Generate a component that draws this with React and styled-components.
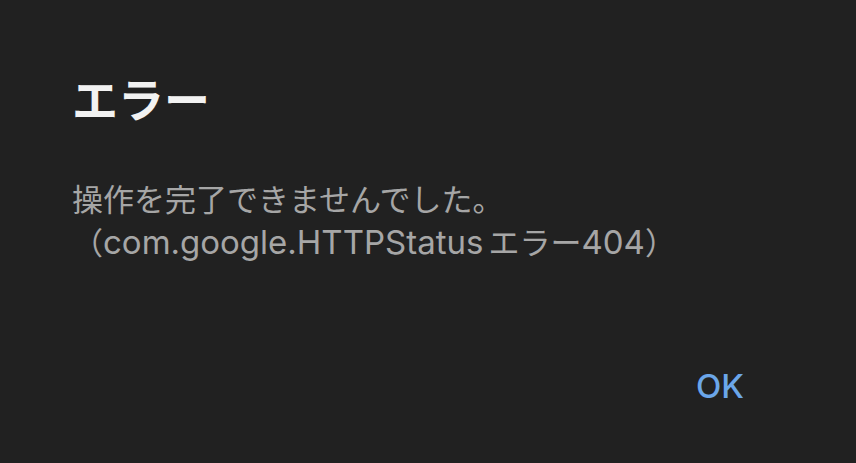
import React from "react";
import styled, { createGlobalStyle } from "styled-components";

const GlobalStyle = createGlobalStyle`
  html, body {
    margin: 0;
    padding: 0;
    background: #212121;
  }
  body {
    font-family: "Inter", "Noto Sans CJK JP", sans-serif;
  }
`;

const Dialog = styled.div`
  width: 856px;
  height: 463px;
  box-sizing: border-box;
  background: #212121;
  padding: 67px 112px 0 72px;
  display: flex;
  flex-direction: column;
`;

const Title = styled.h1`
  margin: 0;
  font-family: "Noto Sans CJK JP", sans-serif;
  font-weight: 700;
  font-size: 46px;
  line-height: 60px;
  color: #f2f2f2;
`;

const Message = styled.p`
  margin: 52px 0 0 0;
  font-family: "Inter", "Noto Sans CJK JP", sans-serif;
  font-size: 31px;
  line-height: 42px;
  color: #a6a6a6;
`;

const Latin = styled.span`
  font-size: 33px;
  margin-right: ${(p) => (p.$gap ? "5px" : "0")};
`;

const Actions = styled.div`
  margin-top: auto;
  margin-bottom: 57px;
  display: flex;
  justify-content: flex-end;
`;

const TextButton = styled.button`
  border: none;
  background: none;
  padding: 0;
  font-family: "Inter", sans-serif;
  font-weight: 500;
  font-size: 33px;
  line-height: 40px;
  color: #6ba6e9;
  cursor: pointer;
`;

export default function App() {
  return (
    <>
      <GlobalStyle />
      <Dialog>
        <Title>エラー</Title>
        <Message>
          操作を完了できませんでした。
          <br />
          （<Latin $gap>com.google.HTTPStatus</Latin>エラー<Latin>404</Latin>）
        </Message>
        <Actions>
          <TextButton>OK</TextButton>
        </Actions>
      </Dialog>
    </>
  );
}
